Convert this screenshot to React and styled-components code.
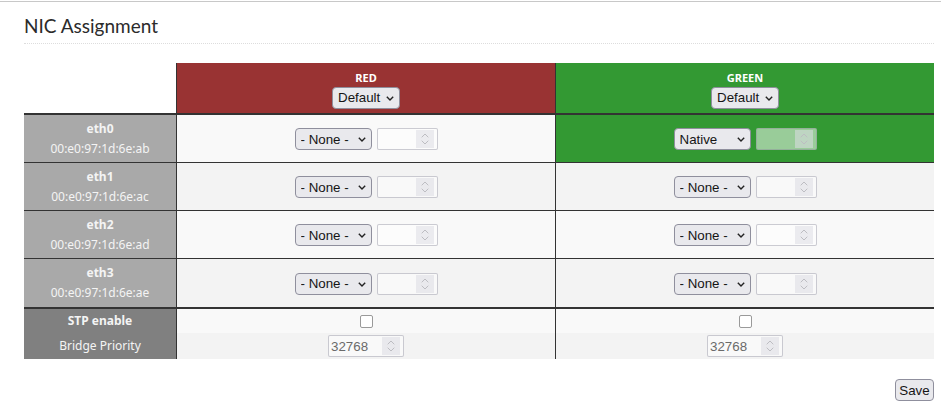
import React from "react";
import styled, { createGlobalStyle } from "styled-components";

const Global = createGlobalStyle`
  html, body { margin: 0; padding: 0; background: #fff; }
  body { font-family: "Noto Sans", "DejaVu Sans", sans-serif; color: #333; }
`;

const controlFont = `"Liberation Sans", Arial, sans-serif`;

const Page = styled.div`
  margin-top: 1px;
  border-top: 1px solid #c8c8c8;
  padding: 0 7px 0 24px;
`;

const Title = styled.h2`
  margin: 11px 0 0;
  padding: 0 0 4px;
  font-family: Lato, "Noto Sans", sans-serif;
  font-weight: 400;
  font-size: 19px;
  line-height: 26px;
  color: #2b2b2b;
  border-bottom: 1px dotted #ddd;
`;

const Grid = styled.div`
  margin-top: 19px;
  width: 910px;
`;

const Row = styled.div`
  display: grid;
  grid-template-columns: 153px 379px 1fr;
  height: ${(p) => p.$h}px;
  border-bottom: ${(p) => (p.$border ? `${p.$border}px solid #333` : "none")};
`;

const bgFor = (p) => {
  if (p.$color === "red") return "#993333";
  if (p.$color === "green") return "#339933";
  return p.$alt ? "#f3f3f3" : "#f9f9f9";
};

const Cell = styled.div`
  box-sizing: border-box;
  display: flex;
  align-items: center;
  justify-content: center;
  gap: 5px;
  padding-top: ${(p) => (p.$nudge ? "1px" : "0")};
  background: ${bgFor};
  border-right: ${(p) => (p.$last ? "none" : "1px solid #333")};
`;

const Corner = styled.div`
  border-right: 1px solid #333;
  background: #fff;
`;

const HeadCell = styled(Cell)`
  flex-direction: column;
  gap: 2px;
  padding-top: 3px;
`;

const HeadLabel = styled.div`
  color: #fff;
  font-weight: 700;
  font-size: 11px;
  line-height: 14px;
`;

const Label = styled.div`
  box-sizing: border-box;
  border-right: 1px solid #333;
  background: ${(p) => (p.$dark ? "#808080" : "#a9a9a9")};
  color: #f4f4f4;
  display: flex;
  flex-direction: column;
  align-items: center;
  justify-content: center;
  text-align: center;
`;

const LabelName = styled.div`
  font-weight: 700;
  font-size: 12px;
  line-height: 20px;
`;

const LabelSub = styled.div`
  font-size: 12px;
  line-height: 20px;
`;

const SelectWrap = styled.span`
  position: relative;
  display: inline-flex;
`;

const Select = styled.select`
  appearance: none;
  -webkit-appearance: none;
  box-sizing: border-box;
  width: ${(p) => p.$w}px;
  height: 22px;
  margin: 0;
  padding: 0 16px 0 5px;
  font-family: ${controlFont};
  font-size: 13.333px;
  color: #151515;
  background: #e9e9ed;
  border: 1px solid #8f8f9d;
  border-radius: 4px;
  outline: none;
`;

const Chevron = styled.svg`
  position: absolute;
  right: 6px;
  top: 9px;
  width: 8px;
  height: 5px;
  pointer-events: none;
`;

const Field = styled.span`
  box-sizing: border-box;
  display: inline-flex;
  align-items: stretch;
  width: ${(p) => p.$w}px;
  height: 22px;
  border: 1px solid rgba(143, 143, 157, 0.45);
  border-radius: 2px;
  background: rgba(255, 255, 255, 0.5);
`;

const NumInput = styled.input`
  flex: 1;
  min-width: 0;
  border: none;
  outline: none;
  margin: 0;
  padding: 0 2px;
  background: transparent;
  font-family: ${controlFont};
  font-size: 13.333px;
  color: #6a6a6a;
  -moz-appearance: textfield;
  &::-webkit-inner-spin-button,
  &::-webkit-outer-spin-button {
    -webkit-appearance: none;
    margin: 0;
  }
`;

const Spin = styled.span`
  width: 18px;
  margin: 1px 3px 1px 0;
  background: rgba(220, 220, 228, 0.55);
  display: flex;
  flex-direction: column;
  align-items: center;
  justify-content: center;
  gap: 2px;
`;

const Checkbox = styled.input`
  appearance: none;
  -webkit-appearance: none;
  box-sizing: border-box;
  width: 13px;
  height: 13px;
  margin: 0;
  border: 1px solid #9a9a9a;
  border-radius: 2px;
  background: #fff;
`;

const Actions = styled.div`
  width: 910px;
  display: flex;
  justify-content: flex-end;
  margin-top: 20px;
`;

const SaveButton = styled.button`
  box-sizing: border-box;
  height: 22px;
  width: 39px;
  padding: 0;
  font-family: ${controlFont};
  font-size: 13.333px;
  color: #151515;
  background: #e9e9ed;
  border: 1px solid #8f8f9d;
  border-radius: 4px;
`;

function Dropdown({ width, value, options }) {
  return (
    <SelectWrap>
      <Select $w={width} defaultValue={value}>
        {options.map((o) => (
          <option key={o}>{o}</option>
        ))}
      </Select>
      <Chevron viewBox="0 0 8 5">
        <path d="M0.8 0.8 L4 4 L7.2 0.8" fill="none" stroke="#222" strokeWidth="1.4" />
      </Chevron>
    </SelectWrap>
  );
}

function NumberField({ width, value }) {
  return (
    <Field $w={width}>
      <NumInput type="number" disabled defaultValue={value} />
      <Spin>
        <svg width="8" height="5" viewBox="0 0 8 5">
          <path d="M0.7 4.3 L4 1 L7.3 4.3" fill="none" stroke="#bdbdc2" strokeWidth="1" />
        </svg>
        <svg width="8" height="5" viewBox="0 0 8 5">
          <path d="M0.7 0.7 L4 4 L7.3 0.7" fill="none" stroke="#bdbdc2" strokeWidth="1" />
        </svg>
      </Spin>
    </Field>
  );
}

const nics = [
  { name: "eth0", mac: "00:e0:97:1d:6e:ab", green: "Native" },
  { name: "eth1", mac: "00:e0:97:1d:6e:ac", green: "- None -" },
  { name: "eth2", mac: "00:e0:97:1d:6e:ad", green: "- None -" },
  { name: "eth3", mac: "00:e0:97:1d:6e:ae", green: "- None -" },
];

const modes = ["- None -", "Native", "Tagged"];

function NicControl({ value, color, alt, last }) {
  return (
    <Cell $color={color} $alt={alt} $last={last} $nudge>
      <Dropdown width={77} value={value} options={modes} />
      <NumberField width={61} />
    </Cell>
  );
}

export default function App() {
  return (
    <>
      <Global />
      <Page>
        <Title>NIC Assignment</Title>
        <Grid>
          <Row $h={50} $border={2}>
            <Corner />
            <HeadCell $color="red">
              <HeadLabel>RED</HeadLabel>
              <Dropdown width={68} value="Default" options={["Default"]} />
            </HeadCell>
            <HeadCell $color="green" $last>
              <HeadLabel>GREEN</HeadLabel>
              <Dropdown width={68} value="Default" options={["Default"]} />
            </HeadCell>
          </Row>
          {nics.map((n, i) => (
            <Row key={n.name} $h={i === 3 ? 48 : 47} $border={i === 3 ? 2 : 1}>
              <Label>
                <LabelName>{n.name}</LabelName>
                <LabelSub>{n.mac}</LabelSub>
              </Label>
              <NicControl value="- None -" alt={i % 2 === 1} />
              <NicControl
                value={n.green}
                alt={i % 2 === 1}
                color={n.green === "Native" ? "green" : undefined}
                last
              />
            </Row>
          ))}
          <Row $h={24}>
            <Label $dark>
              <LabelName>STP enable</LabelName>
            </Label>
            <Cell>
              <Checkbox type="checkbox" />
            </Cell>
            <Cell $last>
              <Checkbox type="checkbox" />
            </Cell>
          </Row>
          <Row $h={26}>
            <Label $dark>
              <LabelSub>Bridge Priority</LabelSub>
            </Label>
            <Cell $alt>
              <NumberField width={76} value={32768} />
            </Cell>
            <Cell $alt $last>
              <NumberField width={76} value={32768} />
            </Cell>
          </Row>
        </Grid>
        <Actions>
          <SaveButton>Save</SaveButton>
        </Actions>
      </Page>
    </>
  );
}
